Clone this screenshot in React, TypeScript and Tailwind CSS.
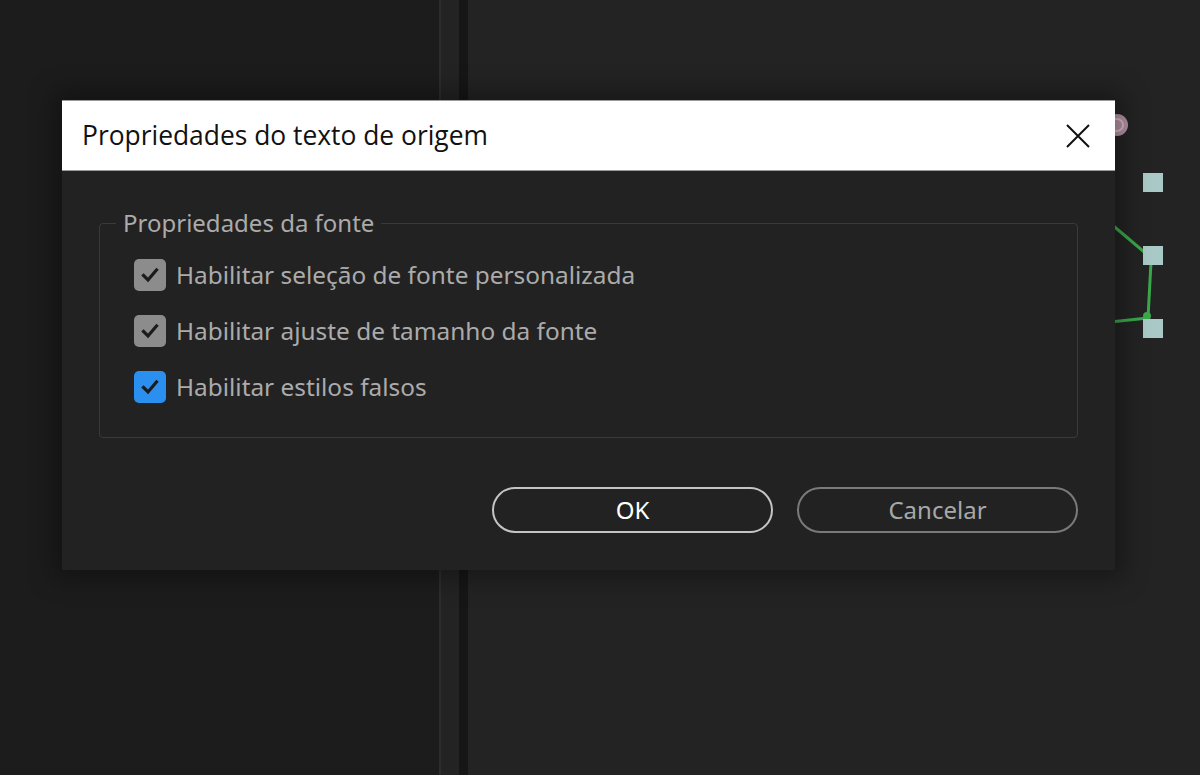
import React from "react";

function Check({ blue }: { blue?: boolean }) {
  return (
    <div
      className={
        "w-[32px] h-[32px] rounded-[5px] flex items-center justify-center shrink-0 " +
        (blue ? "bg-[#2b8ff0]" : "bg-[#8c8c8c]")
      }
    >
      <svg width="22" height="22" viewBox="0 0 22 22" fill="none">
        <path d="M4.5 11.5 L9 16 L17.5 6" stroke="#1b1b1b" strokeWidth="3.2" strokeLinecap="square" />
      </svg>
    </div>
  );
}

function Row({ label, blue }: { label: string; blue?: boolean }) {
  return (
    <div className="flex items-center gap-[10px] h-[56px]">
      <Check blue={blue} />
      <span className="text-[24.4px] text-[#ababab] leading-none">{label}</span>
    </div>
  );
}

export default function App() {
  return (
    <div
      className="relative w-[1200px] h-[775px] overflow-hidden flex bg-[#222222]"
      style={{ fontFamily: '"Noto Sans", "Open Sans", sans-serif' }}
    >
      {/* background panels */}
      <div className="w-[439px] h-full bg-[#1c1c1c]" />
      <div className="w-[2px] h-full bg-[#2d2d2d]" />
      <div className="w-[18px] h-full bg-[#232323]" />
      <div className="w-[9px] h-full bg-[#161616]" />
      <div className="flex-1 h-full bg-[#232323]" />

      {/* diagram bits on right */}
      <svg className="absolute left-0 top-0" width="1200" height="775" viewBox="0 0 1200 775">
        <circle cx="1117" cy="125" r="11" fill="#b894a6" />
        <circle cx="1117" cy="125" r="6" fill="none" stroke="#dcc0cc" strokeWidth="2" />
        <line x1="1110" y1="223" x2="1150" y2="257" stroke="#3aa84a" strokeWidth="3" />
        <line x1="1151" y1="262" x2="1148" y2="318" stroke="#3aa84a" strokeWidth="3" />
        <line x1="1110" y1="322" x2="1148" y2="318" stroke="#3aa84a" strokeWidth="3" />
        <circle cx="1147" cy="316" r="4" fill="#3aa84a" />
        <rect x="1143" y="173" width="20" height="19" fill="#a8c9c5" />
        <rect x="1143" y="246" width="20" height="19" fill="#a8c9c5" />
        <rect x="1143" y="319" width="20" height="19" fill="#a8c9c5" />
      </svg>

      {/* dialog */}
      <div className="absolute left-[62px] top-[100px] w-[1053px] h-[470px] flex flex-col bg-[#222222] shadow-[0_0_24px_8px_rgba(0,0,0,0.35)]">
        <div className="h-[71px] bg-white border-t border-b border-[#9a9a9a] flex items-center justify-between pl-[20px] pr-[24px] shrink-0">
          <span
            className="text-[26.4px] text-[#111111]"
            style={{ fontFamily: '"Open Sans", "Noto Sans", sans-serif' }}
          >
            Propriedades do texto de origem
          </span>
          <svg width="26" height="26" viewBox="0 0 26 26">
            <path d="M2 2 L24 24 M24 2 L2 24" stroke="#111" strokeWidth="2" />
          </svg>
        </div>
        <div className="flex flex-col px-[37px]">
          <div className="relative mt-[52px] h-[215px] border border-[#3a3a3a] rounded-[4px] pl-[34px] pt-[23px]">
            <span className="absolute left-[16px] top-[-16px] px-[7px] bg-[#222222] text-[24px] text-[#ababab] leading-[30px]">
              Propriedades da fonte
            </span>
            <Row label="Habilitar seleção de fonte personalizada" />
            <Row label="Habilitar ajuste de tamanho da fonte" />
            <Row label="Habilitar estilos falsos" blue />
          </div>
          <div className="flex justify-end gap-[24px] mt-[49px]">
            <button className="w-[281px] h-[46px] rounded-full border-2 border-[#c4c4c4] text-[24px] text-white flex items-center justify-center">
              OK
            </button>
            <button className="w-[281px] h-[46px] rounded-full border-2 border-[#7a7a7a] text-[24px] text-[#a8a8a8] flex items-center justify-center">
              Cancelar
            </button>
          </div>
        </div>
      </div>
    </div>
  );
}
